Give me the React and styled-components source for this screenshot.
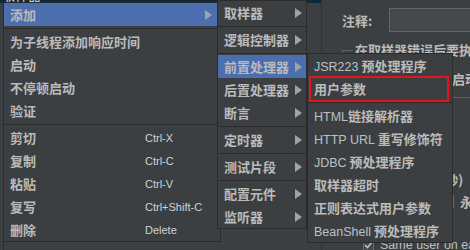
import React from "react";
import styled, { createGlobalStyle } from "styled-components";

const GlobalStyle = createGlobalStyle`
  * { box-sizing: border-box; }
  html, body { margin: 0; padding: 0; background: #3c3f41; overflow: hidden; }
`;

const Page = styled.div`
  position: relative;
  width: 470px;
  height: 250px;
  overflow: hidden;
  display: flex;
  background: #3c3f41;
  color: #bbbbbb;
  font-family: "Noto Sans CJK SC", sans-serif;
`;

const TreePanel = styled.div`
  flex: 0 0 322px;
  display: flex;
  flex-direction: column;
  border-right: 1px solid #2f3133;
`;

const SelectedNode = styled.div`
  height: 3px;
  background: #0d293e;
  display: flex;
  align-items: flex-end;
  overflow: hidden;
  padding-left: 2px;
  font-size: 13px;
  line-height: 16px;
  color: #e0e0e0;
`;

const TreeBody = styled.div`
  flex: 1;
  margin-left: 3px;
  border-left: 1px solid #2b2b2b;
`;

const RightPanel = styled.div`
  flex: 1;
  min-width: 0;
  overflow: hidden;
  display: flex;
  flex-direction: column;
  padding: 8px 0 0 20px;
  font-size: 13px;
  font-weight: 700;
  white-space: nowrap;
`;

const CommentRow = styled.div`
  display: flex;
  align-items: center;
  height: 24px;
`;

const FieldLabel = styled.span`
  width: 47px;
`;

const TextField = styled.div`
  flex: 1;
  height: 24px;
  background: #45494a;
  border: 1px solid #646464;
  border-right: none;
`;

const Group = styled.fieldset`
  margin: 11px 0 0 0;
  padding: 10px 0 8px 8px;
  border: 1px solid #5e6060;
  border-right: none;
  min-width: 0;
`;

const Legend = styled.legend`
  padding: 0 2px;
  margin-left: 2px;
  line-height: 14px;
`;

const OptionRow = styled.div`
  display: flex;
  align-items: center;
  gap: ${p => p.$gap}px;
  height: 22px;
`;

const Option = styled.span`
  display: flex;
  align-items: center;
  gap: 5px;
`;

const Radio = styled.span`
  width: 13px;
  height: 13px;
  border-radius: 50%;
  border: 1px solid #6b6b6b;
  background: #43494a;
`;

const PropRow = styled.div`
  display: flex;
  align-items: center;
  flex: 0 0 22px;
  height: 22px;
  padding-left: ${p => p.$indent}px;
  margin-top: ${p => p.$top || 0}px;
  gap: 6px;
`;

const CheckBox = styled.span`
  width: 13px;
  height: 13px;
  border: 1px solid #6b6b6b;
  background: #43494a;
  display: flex;
  align-items: center;
  justify-content: center;
`;

const Latin = styled.span`
  font-family: "Liberation Sans", Arial, sans-serif;
  font-weight: 400;
  font-size: 12.5px;
  color: #b9c0c8;
`;

const Menu = styled.div`
  position: absolute;
  left: ${p => p.$x}px;
  top: ${p => p.$y}px;
  width: ${p => p.$w}px;
  display: flex;
  flex-direction: column;
  background: #3c3f41;
  border: 1px solid #2b2b2b;
`;

const Item = styled.div`
  height: 23px;
  display: flex;
  align-items: center;
  padding: 0 ${p => p.$padRight}px 0 6px;
  background: ${p => (p.$active ? "#4b6eaf" : "transparent")};
  font-size: 13px;
  font-weight: 700;
  white-space: nowrap;
`;

const Label = styled.span`
  flex: 0 0 auto;
  min-width: ${p => p.$width || 0}px;
`;

const Shortcut = styled.span`
  font-family: "Liberation Sans", Arial, sans-serif;
  font-size: 11px;
  font-weight: 400;
  color: #cfd3d8;
`;

const Arrow = styled.span`
  margin-left: auto;
  width: 0;
  height: 0;
  border-left: 7px solid #a0a2a4;
  border-top: 5px solid transparent;
  border-bottom: 5px solid transparent;
`;

const Separator = styled.div`
  height: 4px;
  display: flex;
  align-items: center;
  &::before {
    content: "";
    flex: 1;
    height: 1px;
    background: #2b2b2b;
  }
`;

const Highlight = styled.div`
  position: absolute;
  left: 309px;
  top: 76px;
  width: 140px;
  height: 26px;
  border: 2px solid #e3151b;
`;

const mainItems = [
  { label: "添加", active: true, sub: true },
  "sep",
  { label: "为子线程添加响应时间" },
  { label: "启动" },
  { label: "不停顿启动" },
  { label: "验证" },
  "sep",
  { label: "剪切", key: "Ctrl-X" },
  { label: "复制", key: "Ctrl-C" },
  { label: "粘贴", key: "Ctrl-V" },
  { label: "复写", key: "Ctrl+Shift-C" },
  { label: "删除", key: "Delete" },
];

const addItems = [
  { label: "取样器" },
  "sep",
  { label: "逻辑控制器" },
  "sep",
  { label: "前置处理器", active: true },
  { label: "后置处理器" },
  { label: "断言" },
  "sep",
  { label: "定时器" },
  "sep",
  { label: "测试片段" },
  "sep",
  { label: "配置元件" },
  { label: "监听器" },
];

const preItems = [
  { latin: "JSR223", label: " 预处理程序" },
  { label: "用户参数" },
  "sep",
  { latin: "HTML", label: "链接解析器" },
  { latin: "HTTP URL", label: " 重写修饰符" },
  { latin: "JDBC", label: " 预处理程序" },
  { label: "取样器超时" },
  { label: "正则表达式用户参数" },
  { latin: "BeanShell", label: " 预处理程序" },
];

function MainMenu() {
  return (
    <Menu $x={3} $y={2} $w={218}>
      {mainItems.map((it, i) =>
        it === "sep" ? (
          <Separator key={i} />
        ) : (
          <Item key={i} $active={it.active} $padRight={8}>
            <Label $width={135}>{it.label}</Label>
            {it.key && <Shortcut>{it.key}</Shortcut>}
            {it.sub && <Arrow />}
          </Item>
        )
      )}
    </Menu>
  );
}

function AddMenu() {
  return (
    <Menu $x={217} $y={0} $w={90}>
      {addItems.map((it, i) =>
        it === "sep" ? (
          <Separator key={i} />
        ) : (
          <Item key={i} $active={it.active} $padRight={4}>
            <Label>{it.label}</Label>
            <Arrow />
          </Item>
        )
      )}
    </Menu>
  );
}

function PreMenu() {
  return (
    <Menu $x={307} $y={53} $w={146}>
      {preItems.map((it, i) =>
        it === "sep" ? (
          <Separator key={i} />
        ) : (
          <Item key={i} $padRight={6}>
            <Label>
              {it.latin && <Latin>{it.latin}</Latin>}
              {it.label}
            </Label>
          </Item>
        )
      )}
    </Menu>
  );
}

export default function App() {
  return (
    <>
      <GlobalStyle />
      <Page>
        <TreePanel>
          <SelectedNode>取样器</SelectedNode>
          <TreeBody />
        </TreePanel>
        <RightPanel>
          <CommentRow>
            <FieldLabel>注释:</FieldLabel>
            <TextField />
          </CommentRow>
          <Group>
            <Legend>在取样器错误后要执行的动作</Legend>
            <OptionRow $gap={39}>
              <Option>
                <Radio />
                继续
              </Option>
              <Option>
                <Radio />
                启动下一进程循环
              </Option>
            </OptionRow>
          </Group>
          <PropRow $indent={12} $top={70}>Ramp-Up时间(秒)</PropRow>
          <PropRow $indent={52}>
            <span>循环次数</span>
            <CheckBox />
            <span>永远</span>
          </PropRow>
          <PropRow $indent={21} $top={22}>
            <CheckBox>
              <svg width="9" height="8" viewBox="0 0 9 8">
                <path d="M1 4l2.5 2.5L8 1" stroke="#c0c0c0" strokeWidth="1.6" fill="none" />
              </svg>
            </CheckBox>
            <Latin>Same user on each iteration</Latin>
          </PropRow>
        </RightPanel>
        <MainMenu />
        <AddMenu />
        <PreMenu />
        <Highlight />
      </Page>
    </>
  );
}
